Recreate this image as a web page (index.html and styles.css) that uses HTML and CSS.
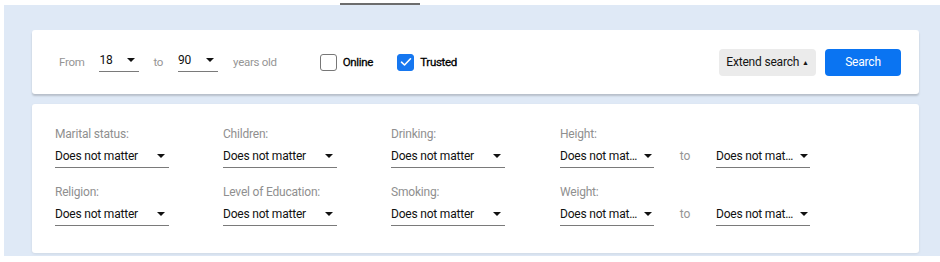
FILE: index.html
```html
<!DOCTYPE html>
<html lang="en">
<head>
<meta charset="UTF-8">
<meta name="viewport" content="width=device-width, initial-scale=1.0">
<title>Search</title>
<link rel="stylesheet" href="styles.css">
</head>
<body>

<!-- top tab indicator -->
<div class="topbar"><div class="tab-line"></div></div>

<div class="page">

  <!-- main search line -->
  <div class="card search-bar">
    <span class="muted">From</span>
    <div class="select age">18 <i class="caret"></i></div>
    <span class="muted to">to</span>
    <div class="select age">90 <i class="caret"></i></div>
    <span class="muted years">years old</span>

    <label class="check">
      <span class="box"></span>
      Online
    </label>
    <label class="check">
      <span class="box on">
        <svg width="12" height="10" viewBox="0 0 12 10"><path d="M1.5 5.2 L4.5 8 L10.5 1.8" fill="none" stroke="#fff" stroke-width="1.6" stroke-linecap="round" stroke-linejoin="round"/></svg>
      </span>
      Trusted
    </label>

    <div class="actions">
      <button class="btn extend">Extend search <span class="up">&#9650;</span></button>
      <button class="btn primary">Search</button>
    </div>
  </div>

  <!-- extended filters -->
  <div class="card filters">
    <div class="field">
      <div class="label">Marital status:</div>
      <div class="select wide">Does not matter <i class="caret"></i></div>
    </div>
    <div class="field">
      <div class="label">Children:</div>
      <div class="select wide">Does not matter <i class="caret"></i></div>
    </div>
    <div class="field">
      <div class="label">Drinking:</div>
      <div class="select wide">Does not matter <i class="caret"></i></div>
    </div>
    <div class="field">
      <div class="label">Height:</div>
      <div class="range">
        <div class="select short">Does not mat… <i class="caret"></i></div>
        <span class="muted range-to">to</span>
        <div class="select short">Does not mat… <i class="caret"></i></div>
      </div>
    </div>

    <div class="field">
      <div class="label">Religion:</div>
      <div class="select wide">Does not matter <i class="caret"></i></div>
    </div>
    <div class="field">
      <div class="label">Level of Education:</div>
      <div class="select wide">Does not matter <i class="caret"></i></div>
    </div>
    <div class="field">
      <div class="label">Smoking:</div>
      <div class="select wide">Does not matter <i class="caret"></i></div>
    </div>
    <div class="field">
      <div class="label">Weight:</div>
      <div class="range">
        <div class="select short">Does not mat… <i class="caret"></i></div>
        <span class="muted range-to">to</span>
        <div class="select short">Does not mat… <i class="caret"></i></div>
      </div>
    </div>
  </div>

</div>

</body>
</html>
```

FILE: styles.css
```css
/* base */
body {
  margin: 0;
  background: #fff;
  font-family: Roboto, "Liberation Sans", sans-serif;
  font-size: 12px;
  letter-spacing: -0.2px;
  color: #151515;
}

/* thin strip above the page */
.topbar {
  height: 5px;
  display: flex;
  align-items: flex-end;
  padding-left: 340px;
}
.tab-line {
  width: 80px;
  height: 2px;
  background: #6d6d6d;
}

/* light blue page area */
.page {
  margin-left: 4px;
  background: #dfe9f6;
  padding: 25px 21px 3px 28px;
}

.card {
  background: #fff;
  border-radius: 3px;
}

.muted {
  color: #959595;
}

/* top line */
.search-bar {
  height: 64px;
  display: flex;
  align-items: center;
  padding: 0 18px 0 27px;
  box-shadow: 0 2px 2px rgba(0, 0, 0, .18);
  margin-bottom: 10px;
  font-size: 11.5px;
  letter-spacing: -0.3px;
}
.search-bar .select {
  margin-left: 15px;
  font-size: 12px;
}
.search-bar .to {
  margin-left: 14px;
}
.search-bar .years {
  margin-left: 15px;
}

/* custom select */
.select {
  display: flex;
  justify-content: space-between;
  align-items: center;
  line-height: 14px;
  padding: 0 4px 4px 0;
  border-bottom: 1px solid #7a7a7a;
  color: #111;
  white-space: nowrap;
}
.select.age { width: 36px; }
.select.wide { width: 110px; }
.select.short { width: 90px; padding-right: 2px; width: 92px; }

.caret {
  width: 0;
  height: 0;
  border-left: 4px solid transparent;
  border-right: 4px solid transparent;
  border-top: 4px solid #111;
}

/* checkboxes */
.check {
  display: flex;
  align-items: center;
  color: #000;
  -webkit-text-stroke: 0.3px #000;
  margin-left: 43px;
}
.check + .check {
  margin-left: 24px;
}
.box {
  width: 15px;
  height: 15px;
  border: 1.5px solid #777;
  border-radius: 3px;
  margin-right: 6px;
  display: flex;
  align-items: center;
  justify-content: center;
}
.box.on {
  background: #1677f0;
  border-color: #1677f0;
}

/* buttons */
.actions {
  margin-left: auto;
  display: flex;
}
.btn {
  height: 27px;
  padding: 0;
  border: none;
  border-radius: 4px;
  font-family: inherit;
  font-size: 12px;
  letter-spacing: -0.2px;
  white-space: nowrap;
  cursor: pointer;
}
.btn.extend {
  width: 97px;
  background: #ebebeb;
  color: #151515;
}
.btn.extend .up {
  font-size: 7px;
  vertical-align: 1px;
}
.btn.primary {
  width: 76px;
  margin-left: 9px;
  background: #0a74f2;
  color: #fff;
}

/* extended filters */
.filters {
  display: grid;
  grid-template-columns: 168px 168px 169px auto;
  row-gap: 17px;
  padding: 23px 20px 27px 23px;
  box-shadow: 0 1px 3px rgba(0, 0, 0, .08);
}
.label {
  color: #8f8f8f;
  line-height: 14px;
  margin-bottom: 8px;
}
.range {
  display: flex;
  align-items: flex-start;
}
.range-to {
  width: 62px;
  text-align: center;
  line-height: 14px;
}
```
